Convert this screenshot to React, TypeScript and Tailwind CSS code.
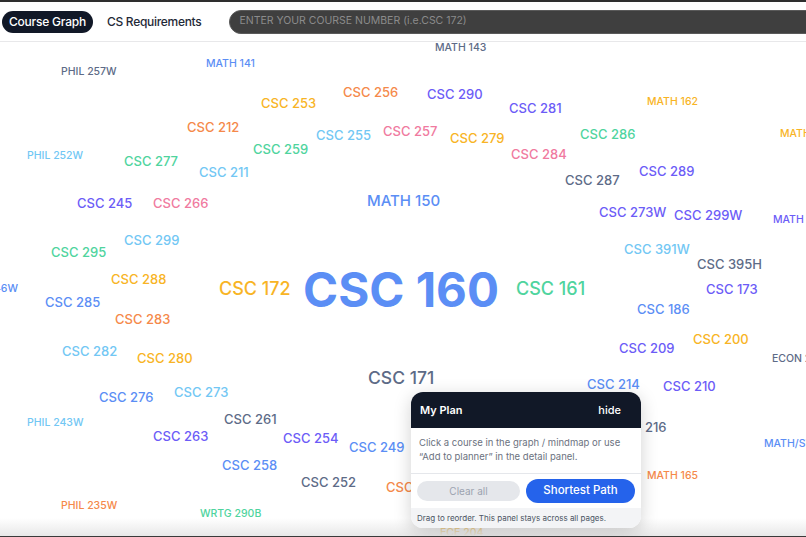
import React from "react";

type W = { t: string; x: number; y: number; s: number; c: string; b?: boolean; right?: boolean };

const C = {
  blue: "#5b8ef5",
  violet: "#6c5cf7",
  orange: "#f5894a",
  amber: "#f8b425",
  sky: "#72c7f4",
  pink: "#f07aa0",
  green: "#4fd49e",
  slate: "#5d6b87",
};

const S = 13;
const M = 10.5;

const words: W[] = [
  { t: "MATH 143", x: 435, y: 48, s: M, c: C.slate },
  { t: "PHIL 257W", x: 61, y: 72, s: M, c: C.slate },
  { t: "MATH 141", x: 206, y: 64, s: M, c: C.blue },
  { t: "CSC 253", x: 261, y: 103, s: S, c: C.amber },
  { t: "CSC 256", x: 343, y: 92, s: S, c: C.orange },
  { t: "CSC 290", x: 427, y: 94, s: S, c: C.violet },
  { t: "CSC 281", x: 509, y: 108, s: S, c: C.violet },
  { t: "MATH 162", x: 647, y: 102, s: M, c: C.amber },
  { t: "MATH 170", x: 780, y: 134, s: M, c: C.amber },
  { t: "CSC 212", x: 187, y: 127, s: S, c: C.orange },
  { t: "CSC 255", x: 316, y: 135, s: S, c: C.sky },
  { t: "CSC 257", x: 383, y: 131, s: S, c: C.pink },
  { t: "CSC 279", x: 450, y: 138, s: S, c: C.amber },
  { t: "CSC 286", x: 580, y: 134, s: S, c: C.green },
  { t: "CSC 259", x: 253, y: 149, s: S, c: C.green },
  { t: "PHIL 252W", x: 27, y: 156, s: M, c: C.sky },
  { t: "CSC 277", x: 124, y: 161, s: S, c: C.green },
  { t: "CSC 284", x: 511, y: 154, s: S, c: C.pink },
  { t: "CSC 211", x: 199, y: 172, s: S, c: C.sky },
  { t: "CSC 287", x: 565, y: 180, s: S, c: C.slate },
  { t: "CSC 289", x: 639, y: 171, s: S, c: C.violet },
  { t: "CSC 245", x: 77, y: 203, s: S, c: C.violet },
  { t: "CSC 266", x: 153, y: 203, s: S, c: C.pink },
  { t: "MATH 150", x: 367, y: 200, s: 15, c: C.blue },
  { t: "CSC 273W", x: 599, y: 212, s: S, c: C.violet },
  { t: "CSC 299W", x: 674, y: 215, s: S, c: C.violet },
  { t: "MATH 171", x: 773, y: 220, s: M, c: C.violet },
  { t: "CSC 299", x: 124, y: 240, s: S, c: C.sky },
  { t: "CSC 295", x: 51, y: 252, s: S, c: C.green },
  { t: "CSC 391W", x: 624, y: 249, s: S, c: C.sky },
  { t: "CSC 395H", x: 697, y: 264, s: S, c: C.slate },
  { t: "CSC 288", x: 111, y: 279, s: S, c: C.amber },
  { t: "PHIL 246W", x: 18, y: 289, s: M, c: C.blue, right: true },
  { t: "CSC 172", x: 219, y: 289, s: 18, c: C.amber },
  { t: "CSC 160", x: 303, y: 290, s: 47.5, c: C.blue, b: true },
  { t: "CSC 161", x: 516, y: 289, s: 18, c: C.green },
  { t: "CSC 285", x: 45, y: 302, s: S, c: C.blue },
  { t: "CSC 173", x: 706, y: 289, s: S, c: C.violet },
  { t: "CSC 186", x: 637, y: 309, s: S, c: C.blue },
  { t: "CSC 283", x: 115, y: 319, s: S, c: C.orange },
  { t: "CSC 200", x: 693, y: 339, s: S, c: C.amber },
  { t: "CSC 282", x: 62, y: 351, s: S, c: C.sky },
  { t: "CSC 280", x: 137, y: 358, s: S, c: C.amber },
  { t: "CSC 209", x: 619, y: 348, s: S, c: C.violet },
  { t: "ECON 230", x: 772, y: 359, s: M, c: C.slate },
  { t: "CSC 171", x: 368, y: 378, s: 17.5, c: C.slate },
  { t: "CSC 214", x: 587, y: 384, s: S, c: C.blue },
  { t: "CSC 210", x: 663, y: 386, s: S, c: C.violet },
  { t: "CSC 276", x: 99, y: 397, s: S, c: C.blue },
  { t: "CSC 273", x: 174, y: 392, s: S, c: C.sky },
  { t: "PHIL 243W", x: 27, y: 423, s: M, c: C.sky },
  { t: "CSC 261", x: 224, y: 419, s: S, c: C.slate },
  { t: "CSC 216", x: 614, y: 427, s: S, c: C.slate },
  { t: "CSC 263", x: 153, y: 436, s: S, c: C.violet },
  { t: "CSC 254", x: 283, y: 438, s: S, c: C.violet },
  { t: "CSC 249", x: 349, y: 447, s: S, c: C.blue },
  { t: "MATH/STAT 203", x: 764, y: 444, s: M, c: C.blue },
  { t: "CSC 258", x: 222, y: 465, s: S, c: C.blue },
  { t: "MATH 165", x: 647, y: 476, s: M, c: C.orange },
  { t: "CSC 252", x: 301, y: 482, s: S, c: C.slate },
  { t: "CSC 242", x: 386, y: 487, s: S, c: C.orange },
  { t: "PHIL 235W", x: 61, y: 506, s: M, c: C.orange },
  { t: "WRTG 290B", x: 200, y: 514, s: M, c: C.green },
  { t: "ECE 204", x: 440, y: 533, s: M, c: C.amber },
];

export default function App() {
  return (
    <div
      className="relative flex h-[537px] w-[806px] flex-col overflow-hidden bg-white"
      style={{ fontFamily: "Inter, 'Noto Sans', Arial, sans-serif" }}
    >
      <div className="h-[2px] shrink-0 bg-[#2e2e2e]" />
      <header className="relative z-20 flex h-[40px] shrink-0 items-center border-b border-[#e8e8ea] bg-white pl-[2px]">
        <button className="h-[22px] w-[91px] shrink-0 whitespace-nowrap rounded-full bg-[#111827] text-[12px] font-medium leading-none tracking-[-0.2px] text-white">
          Course Graph
        </button>
        <button className="ml-[14px] shrink-0 whitespace-nowrap text-[12px] font-medium leading-none tracking-[-0.3px] text-[#1f2937]">
          CS Requirements
        </button>
        <div className="-mr-[30px] ml-[28px] flex h-[24px] flex-1 items-center rounded-full border border-[#5a5a5a] bg-[#3f3f3f] pl-[9px]">
          <span className="whitespace-nowrap text-[10.5px] leading-none text-[#8b8b8b]">
            ENTER YOUR COURSE NUMBER (i.e.CSC 172)
          </span>
        </div>
      </header>
      <main className="relative flex-1 overflow-hidden bg-white">
        {words.map((w) => (
          <span
            key={w.t}
            className={`absolute whitespace-nowrap leading-none ${w.b ? "font-bold" : "font-medium"}`}
            style={{
              left: w.right ? undefined : w.x,
              right: w.right ? 806 - w.x : undefined,
              top: w.y - 42,
              transform: "translateY(-50%)",
              fontSize: w.s,
              color: w.c,
            }}
          >
            {w.t}
          </span>
        ))}
        <div className="pointer-events-none absolute inset-x-0 bottom-0 h-[18px] bg-gradient-to-b from-transparent to-[#e8e8e8]" />
        <div className="absolute left-[411px] top-[350px] z-10 w-[230px] overflow-hidden rounded-[12px] bg-white shadow-[0_4px_18px_rgba(0,0,0,0.18)]">
          <div className="flex h-[36px] items-center justify-between bg-[#111827] px-[9px]">
            <span className="text-[11px] font-semibold text-white">My Plan</span>
            <span className="pr-[11px] text-[11px] font-medium text-white">hide</span>
          </div>
          <div className="border-b border-[#e5e7eb] px-[8px] pb-[9px] pt-[8px] text-[9.5px] leading-[14px] text-[#6b7280]">
            Click a course in the graph / mindmap or use “Add to planner” in the detail panel.
          </div>
          <div className="flex items-center gap-[6px] px-[6px] py-[5px]">
            <button className="h-[20px] w-[103px] rounded-full bg-[#e5e7eb] text-[10px] text-[#9ca3af]">
              Clear all
            </button>
            <button className="h-[24px] w-[109px] rounded-full bg-[#2563eb] text-[11.5px] font-medium text-white">
              Shortest Path
            </button>
          </div>
          <div className="flex h-[20px] items-center bg-[#f3f4f6] px-[6px] text-[8px] text-[#4b5563]">
            Drag to reorder. This panel stays across all pages.
          </div>
        </div>
      </main>
      <div className="h-[1px] shrink-0 bg-[#3a3a3a]" />
    </div>
  );
}
